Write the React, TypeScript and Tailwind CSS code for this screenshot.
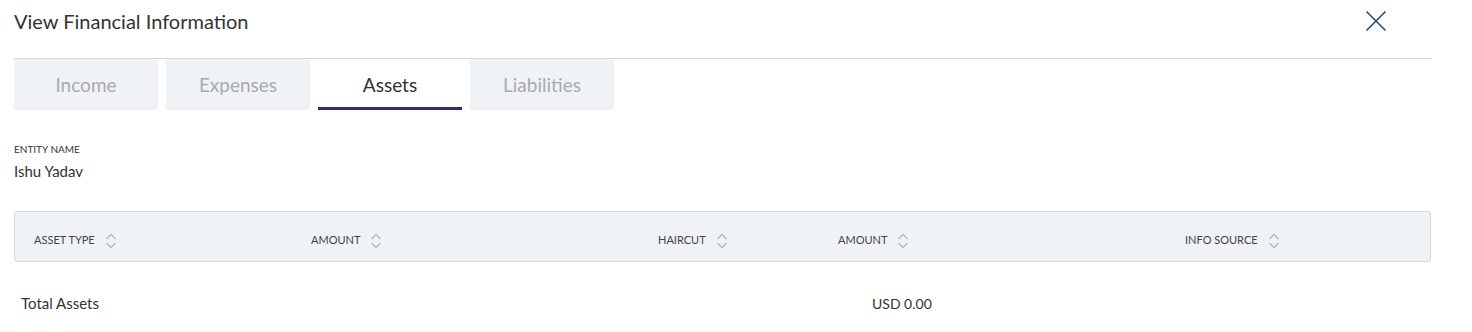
import React from 'react';

const tabs = ['Income', 'Expenses', 'Assets', 'Liabilities'];

const columns = [
  { label: 'ASSET TYPE' },
  { label: 'AMOUNT' },
  { label: 'HAIRCUT' },
  { label: 'AMOUNT' },
  { label: 'INFO SOURCE' },
];

function SortIcon() {
  return (
    <svg width="12" height="16" viewBox="0 0 12 16" fill="none" className="ml-[10px]">
      <path d="M1.5 6 L6 1.5 L10.5 6" stroke="#a9b9cb" strokeWidth="1.3" />
      <path d="M1.5 10 L6 14.5 L10.5 10" stroke="#a9b9cb" strokeWidth="1.3" />
    </svg>
  );
}

export default function App() {
  return (
    <main
      className="w-[1472px] h-[332px] bg-white text-[#333] overflow-hidden"
      style={{ fontFamily: 'Lato, "Noto Sans", sans-serif' }}
    >
      {/* Header */}
      <div className="flex items-center justify-between pl-[14px] pr-[85px] h-[42px]">
        <h1 className="text-[20px] leading-none text-[#333]">View Financial Information</h1>
        <button className="w-[22px] h-[22px] flex items-center justify-center">
          <svg width="22" height="22" viewBox="0 0 22 22" fill="none">
            <path d="M1.5 1.5 L20.5 20.5 M20.5 1.5 L1.5 20.5" stroke="#1e4f7d" strokeWidth="1.6" />
          </svg>
        </button>
      </div>

      <div className="mx-[14px] mt-[16px] w-[1417px] border-t border-[#d8d8d8]">
        {/* Tabs */}
        <div className="flex gap-[8px] h-[51px]">
          {tabs.map((t) => {
            const active = t === 'Assets';
            return (
              <div
                key={t}
                className={
                  active
                    ? 'w-[144px] flex items-center justify-center bg-white text-[#333] text-[19px] border-b-[3px] border-[#2a2d78] pt-[4px]'
                    : 'w-[144px] flex items-center justify-center bg-[#f0f3f6] text-[#a8abae] text-[19px] pt-[1px]'
                }
              >
                {t}
              </div>
            );
          })}
        </div>

        {/* Entity */}
        <div className="mt-[34px]">
          <div className="text-[10px] leading-none uppercase text-[#333]">Entity Name</div>
          <div className="mt-[10px] text-[15px] leading-none">Ishu Yadav</div>
        </div>

        {/* Table header */}
        <div className="mt-[32px] h-[51px] bg-[#f0f3f6] border border-[#d6d8da] rounded-[3px] grid grid-cols-[277px_347px_180px_347px_1fr] items-center pt-[8px]">
          {columns.map((c, i) => (
            <div key={i} className="flex items-center pl-[19px] text-[11px] text-[#444] uppercase">
              <span>{c.label}</span>
              <SortIcon />
            </div>
          ))}
        </div>

        {/* Totals */}
        <div className="flex items-center mt-[30px] pl-[7px] text-[#333]">
          <span className="w-[851px] text-[15px]">Total Assets</span>
          <span className="text-[14px]">USD 0.00</span>
        </div>
      </div>
    </main>
  );
}
